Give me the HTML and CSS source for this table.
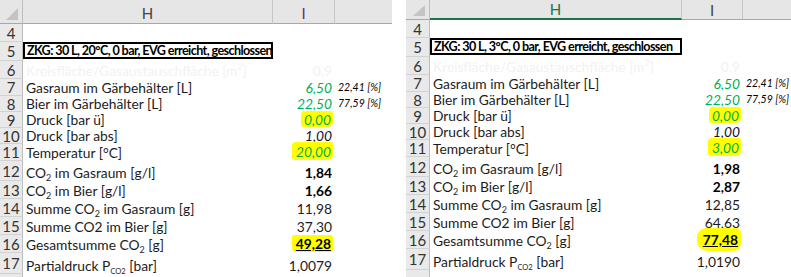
FILE: index.html
```html
<!DOCTYPE html>
<html>
<head>
<meta charset="utf-8">
<link rel="stylesheet" href="styles.css">
</head>
<body>
<div class="page">
  <div class="sheet sheet-left">
    <div class="corner"><svg width="23" height="24" viewBox="0 0 23 24"><polygon points="18,8 18,20 6,20" fill="#c4c4c4"/></svg></div>
    <div class="colhead">H</div>
    <div class="colhead colhead-purple">I</div>
    <div class="colhead colhead-last"></div>

    <div class="rh">4</div><div class="c"></div><div class="c"></div><div class="c"></div>

    <div class="rh">5</div><div class="c title"><span>ZKG: 30 L, 20°C, 0 bar, EVG erreicht, geschlossen</span></div><div class="c"></div><div class="c"></div>

    <div class="rh">6</div><div class="c faint"><span>Kreisfläche/Gasaustauschfläche [m<sup>2</sup>]</span></div><div class="c num faint"><span>0,9</span></div><div class="c"></div>

    <div class="rh">7</div><div class="c"><span>Gasraum im Gärbehälter [L]</span></div><div class="c num input"><span>6,50</span></div><div class="c pct"><span>22,41 [%]</span></div>

    <div class="rh">8</div><div class="c"><span>Bier im Gärbehälter [L]</span></div><div class="c num input"><span>22,50</span></div><div class="c pct"><span>77,59 [%]</span></div>

    <div class="rh">9</div><div class="c"><span>Druck [bar ü]</span></div><div class="c num input"><span class="hl hl-a">0,00</span></div><div class="c"></div>

    <div class="rh">10</div><div class="c"><span>Druck [bar abs]</span></div><div class="c num ital"><span>1,00</span></div><div class="c"></div>

    <div class="rh">11</div><div class="c"><span>Temperatur [°C]</span></div><div class="c num input"><span class="hl hl-b">20,00</span></div><div class="c"></div>

    <div class="rh">12</div><div class="c"><span>CO<sub>2</sub> im Gasraum [g/l]</span></div><div class="c num bold"><span>1,84</span></div><div class="c"></div>

    <div class="rh">13</div><div class="c"><span>CO<sub>2</sub> im Bier [g/l]</span></div><div class="c num bold"><span>1,66</span></div><div class="c"></div>

    <div class="rh">14</div><div class="c"><span>Summe CO<sub>2</sub> im Gasraum [g]</span></div><div class="c num"><span>11,98</span></div><div class="c"></div>

    <div class="rh">15</div><div class="c"><span>Summe CO2 im Bier [g]</span></div><div class="c num"><span>37,30</span></div><div class="c"></div>

    <div class="rh">16</div><div class="c"><span>Gesamtsumme CO<sub>2</sub> [g]</span></div><div class="c num bold"><span class="hl hl-c total">49,28</span></div><div class="c"></div>

    <div class="rh">17</div><div class="c"><span>Partialdruck P<sub class="small">CO2</sub> [bar]</span></div><div class="c num"><span>1,0079</span></div><div class="c"></div>

    <div class="rh"></div><div class="c"></div><div class="c"></div><div class="c"></div>
  </div>

  <div class="sheet sheet-right">
    <div class="corner"><svg width="24" height="22" viewBox="0 0 24 22"><polygon points="19,7 19,18 7,18" fill="#c4c4c4"/></svg></div>
    <div class="colhead colhead-green">H</div>
    <div class="colhead">I</div>
    <div class="colhead colhead-last"></div>

    <div class="rh">4</div><div class="c"></div><div class="c"></div><div class="c"></div>

    <div class="rh">5</div><div class="c title"><span>ZKG: 30 L, 3°C, 0 bar, EVG erreicht, geschlossen</span></div><div class="c"></div><div class="c"></div>

    <div class="rh">6</div><div class="c faint"><span>Kreisfläche/Gasaustauschfläche [m<sup>2</sup>]</span></div><div class="c num faint"><span>0,9</span></div><div class="c"></div>

    <div class="rh">7</div><div class="c"><span>Gasraum im Gärbehälter [L]</span></div><div class="c num input"><span>6,50</span></div><div class="c pct"><span>22,41 [%]</span></div>

    <div class="rh">8</div><div class="c"><span>Bier im Gärbehälter [L]</span></div><div class="c num input"><span>22,50</span></div><div class="c pct"><span>77,59 [%]</span></div>

    <div class="rh">9</div><div class="c"><span>Druck [bar ü]</span></div><div class="c num input"><span class="hl hl-a">0,00</span></div><div class="c"></div>

    <div class="rh">10</div><div class="c"><span>Druck [bar abs]</span></div><div class="c num ital"><span>1,00</span></div><div class="c"></div>

    <div class="rh">11</div><div class="c"><span>Temperatur [°C]</span></div><div class="c num input"><span class="hl hl-b">3,00</span></div><div class="c"></div>

    <div class="rh">12</div><div class="c"><span>CO<sub>2</sub> im Gasraum [g/l]</span></div><div class="c num bold"><span>1,98</span></div><div class="c"></div>

    <div class="rh">13</div><div class="c"><span>CO<sub>2</sub> im Bier [g/l]</span></div><div class="c num bold"><span>2,87</span></div><div class="c"></div>

    <div class="rh">14</div><div class="c"><span>Summe CO<sub>2</sub> im Gasraum [g]</span></div><div class="c num"><span>12,85</span></div><div class="c"></div>

    <div class="rh">15</div><div class="c"><span>Summe CO2 im Bier [g]</span></div><div class="c num"><span>64,63</span></div><div class="c"></div>

    <div class="rh">16</div><div class="c"><span>Gesamtsumme CO<sub>2</sub> [g]</span></div><div class="c num bold"><span class="hl hl-d total">77,48</span></div><div class="c"></div>

    <div class="rh">17</div><div class="c"><span>Partialdruck P<sub class="small">CO2</sub> [bar]</span></div><div class="c num"><span>1,0190</span></div><div class="c"></div>

    <div class="rh"></div><div class="c"></div><div class="c"></div><div class="c"></div>
  </div>
</div>
</body>
</html>
```

FILE: styles.css
```css
html, body {
  margin: 0;
  padding: 0;
  background: #ffffff;
  overflow: hidden;
}
.page {
  display: flex;
  gap: 14px;
  width: 791px;
  height: 277px;
  overflow: hidden;
  font-family: Lato, "Open Sans", sans-serif;
  font-size: 13.8px;
  color: #1c1c1c;
}
.sheet {
  display: grid;
  grid-template-rows: 24px 18px 19px 18px 17px 16px 16px 16px 17px 20px 18px 18px 18px 18px 21px 20px;
  overflow: hidden;
  height: 277px;
}
.sheet-left {
  grid-template-columns: 23px 250px 62px 57px;
  width: 392px;
}
.sheet-right {
  grid-template-columns: 24px 252px 61px 48px;
  width: 385px;
  margin-top: -2px;
  height: 279px;
  grid-template-rows: 22px 18px 19px 18px 17px 16px 16px 16px 17px 20px 18px 18px 18px 18px 21px 20px;
}
.corner {
  background: #e6e6e6;
  border-right: 1px solid #bdbdbd;
  border-bottom: 1px solid #a8a8a8;
  box-sizing: border-box;
}
.corner svg { display: block; }
.colhead {
  background: #e6e6e6;
  border-right: 1px solid #c6c6c6;
  border-bottom: 1px solid #a8a8a8;
  box-sizing: border-box;
  display: flex;
  align-items: center;
  justify-content: center;
  font-size: 15px;
  color: #444;
  padding-top: 2px;
}
.colhead-last { border-right: none; }
.colhead-purple { color: #6a2a78; }
.colhead-green {
  color: #217346;
  border-bottom: 2px solid #217346;
}
.rh {
  background: #e9e9e9;
  border-right: 1px solid #bdbdbd;
  border-bottom: 1px solid #d2d2d2;
  box-sizing: border-box;
  display: flex;
  align-items: center;
  justify-content: center;
  font-size: 15px;
  line-height: 14px;
  color: #333;
}
.c {
  display: flex;
  align-items: flex-end;
  padding: 0 3px 1px 3px;
  white-space: nowrap;
  box-sizing: border-box;
  line-height: 15px;
}
.num { justify-content: flex-end; }
.title {
  align-self: start;
  height: 17px;
  border: 2px solid #000;
  padding: 0 2px;
  font-weight: bold;
  font-size: 12.6px;
  letter-spacing: -0.6px;
  align-items: center;
  color: #000;
}
.faint { color: #f2f2f2; }
.input { font-style: italic; color: #00b050; }
.ital { font-style: italic; color: #10102a; }
.bold { font-weight: bold; color: #000; }
.pct { font-style: italic; font-size: 10.5px; color: #000; }
.total { text-decoration: underline; }
sub {
  font-size: 9px;
  vertical-align: -3px;
  line-height: 0;
}
sub.small { font-size: 7.5px; vertical-align: -3px; }
sup { font-size: 9px; line-height: 0; }
.hl {
  display: inline-block;
  background: #ffff00;
  padding: 1px 2px 0 3px;
  margin-right: -1px;
  border-radius: 4px 2px 5px 3px;
}
.hl-b { padding: 2px 2px 1px 4px; }
.hl-c { padding: 1px 2px 1px 4px; border-radius: 2px 3px 2px 4px; }
.hl-d { padding: 4px 3px 4px 6px; border-radius: 9px 5px 8px 10px; margin-bottom: -3px; }
```
